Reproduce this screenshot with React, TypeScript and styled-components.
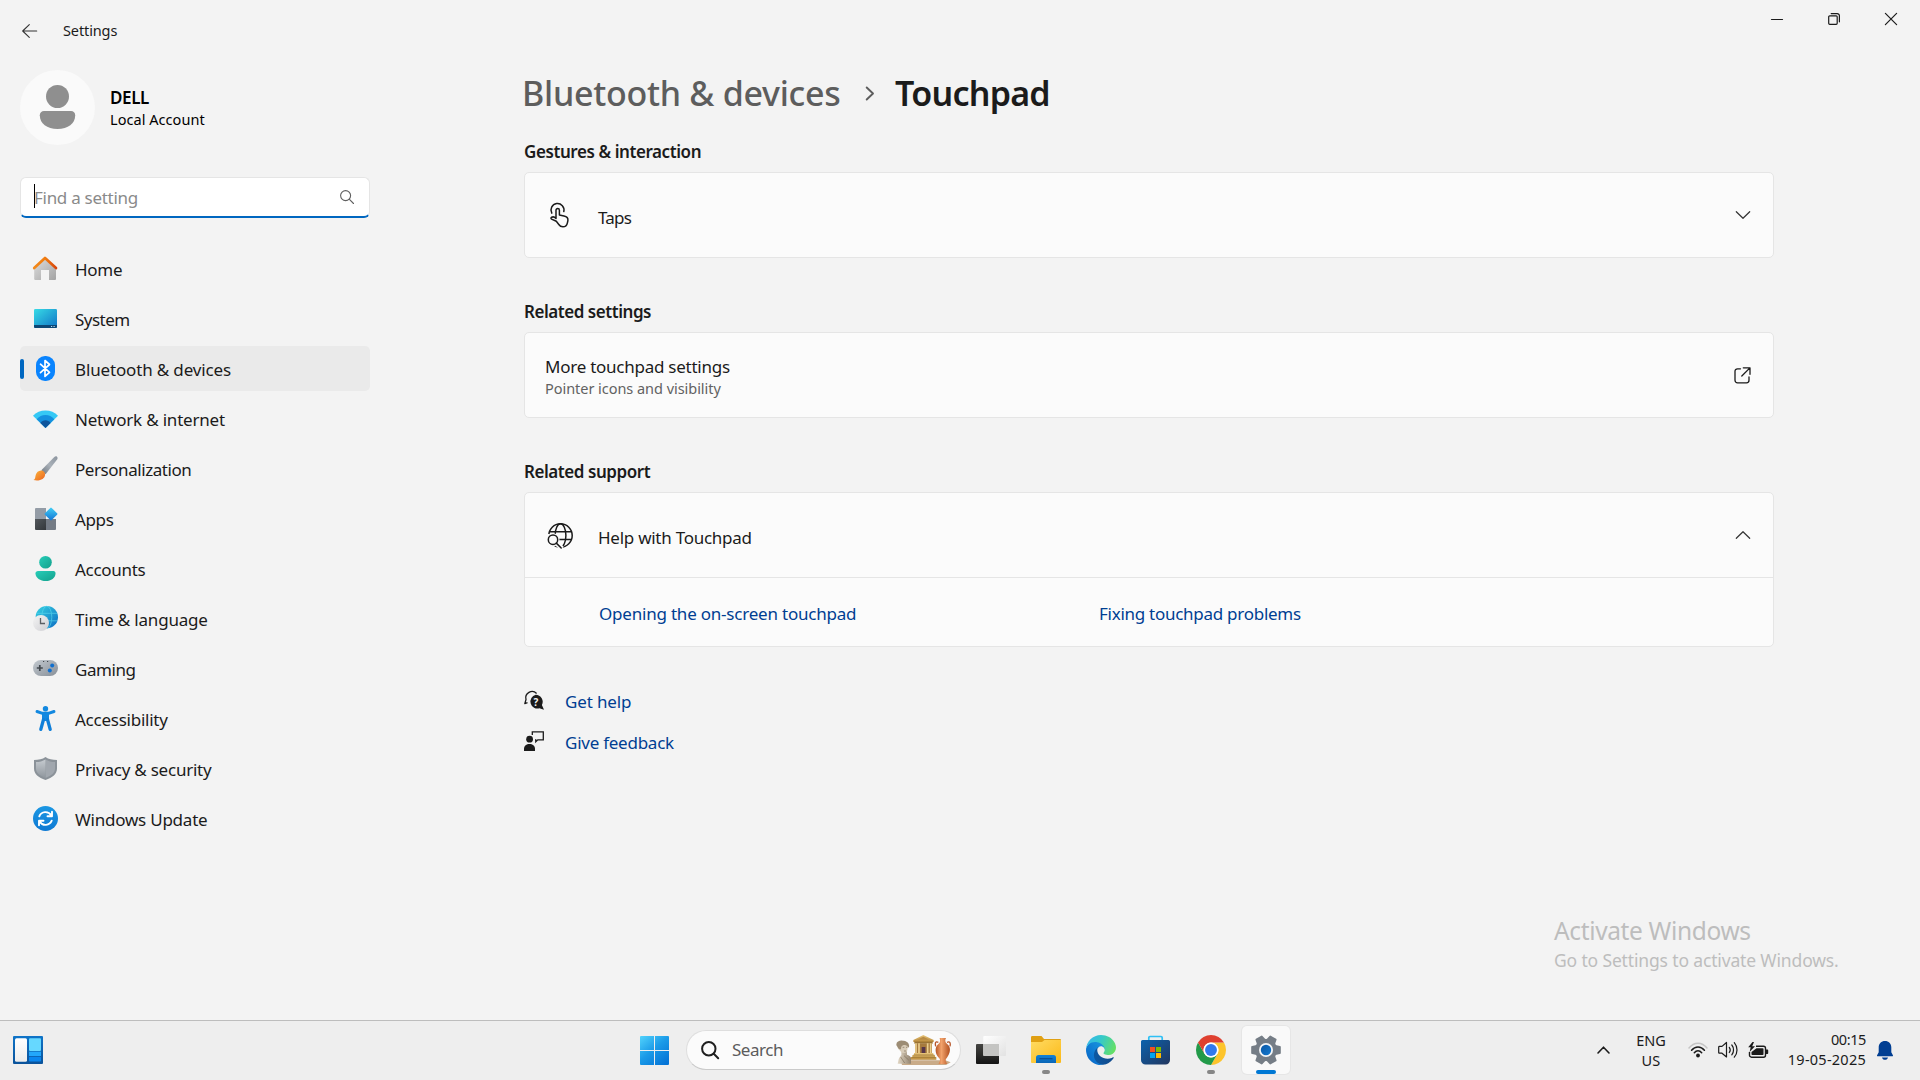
import React from "react";
import styled, { createGlobalStyle } from "styled-components";

const GlobalStyle = createGlobalStyle`
  *, *::before, *::after { box-sizing: border-box; }
  body { margin: 0; background: #f3f3f3; overflow: hidden; }
  svg { display: block; flex: none; overflow: visible; }
`;

/* ---------- shell ---------- */

const Desktop = styled.div`
  width: 1920px;
  height: 1080px;
  display: flex;
  flex-direction: column;
  background: #f3f3f3;
  color: #1b1b1b;
  font-family: "Noto Sans", "Open Sans", sans-serif;
  font-size: 17px;
  position: relative;
`;

const SettingsWindow = styled.div`
  flex: 1;
  display: flex;
  flex-direction: column;
`;

const TitleBar = styled.header`
  height: 62px;
  display: flex;
  justify-content: space-between;
  align-items: flex-start;
`;

const TitleLeft = styled.div`
  height: 62px;
  display: flex;
  align-items: center;
  gap: 26px;
  padding-left: 22px;
`;

const Label = styled.span<{ $ls?: number }>`
  white-space: nowrap;
  letter-spacing: ${(p) => p.$ls ?? -0.2}px;
`;

const WindowTitle = styled(Label)`
  font-size: 14.5px;
  line-height: 20px;
  margin-bottom: 2px;
`;

const WindowControls = styled.div`
  display: flex;
  padding-right: 1px;
`;

const ControlButton = styled.div`
  width: 57px;
  height: 38px;
  display: flex;
  align-items: center;
  justify-content: center;
`;

const Body = styled.div`
  flex: 1;
  display: grid;
  grid-template-columns: 370px 1250px;
  column-gap: 154px;
`;

/* ---------- sidebar ---------- */

const Sidebar = styled.aside`
  padding: 8px 0 0 20px;
`;

const Profile = styled.div`
  height: 75px;
  display: flex;
  align-items: center;
  gap: 15px;
`;

const ProfileText = styled.div`
  display: flex;
  flex-direction: column;
  padding-top: 1px;
  color: #000;
`;

const ProfileName = styled(Label)`
  font-weight: 600;
  line-height: 22px;
`;

const ProfileKind = styled(Label)`
  font-size: 14.5px;
  line-height: 20px;
`;

const SearchBox = styled.div`
  height: 41px;
  margin-top: 32px;
  display: flex;
  align-items: center;
  padding: 0 15px 0 13px;
  background: #fff;
  border: 1px solid #e5e5e5;
  border-bottom: 2px solid #0067c0;
  border-radius: 6px;
`;

const Caret = styled.i`
  width: 1px;
  height: 24px;
  background: #000;
  margin-bottom: 3px;
`;

const Placeholder = styled(Label)`
  flex: 1;
  color: #8a8a8a;
  line-height: 24px;
  padding-top: 1px;
  margin-left: -1px;
`;

const Nav = styled.nav`
  margin-top: 28px;
  display: flex;
  flex-direction: column;
  gap: 5px;
`;

const NavRow = styled.div<{ $active?: boolean }>`
  height: 45px;
  display: flex;
  align-items: center;
  gap: 17px;
  padding-left: ${(p) => (p.$active ? 0 : 13)}px;
  border-radius: 5px;
  background: ${(p) => (p.$active ? "#eaeaea" : "transparent")};
`;

const ActiveMark = styled.i`
  width: 4px;
  height: 20px;
  border-radius: 2px;
  background: #0067c0;
  margin-right: -8px;
`;

const NavLabel = styled(Label)`
  line-height: 24px;
  padding-top: 2px;
`;

/* ---------- main ---------- */

const Main = styled.main`
  padding-top: 11px;
  display: flex;
  flex-direction: column;
`;

const Breadcrumb = styled.h1`
  margin: 0;
  height: 40px;
  display: flex;
  align-items: center;
  font-size: 34px;
  font-weight: 500;
  line-height: 40px;
`;

const CrumbParent = styled(Label)`
  width: 341px;
  color: #5d5d5d;
  margin-left: -2px;
  margin-right: 2px;
`;

const CrumbCurrent = styled(Label)`
  margin-left: 21px;
  font-weight: 560;
`;

const SectionTitle = styled.h2<{ $first?: boolean; $ls: number }>`
  margin: ${(p) => (p.$first ? 26 : 41)}px 0 7px;
  height: 26px;
  font-size: 17px;
  font-weight: 600;
  line-height: 26px;
  letter-spacing: ${(p) => p.$ls}px;
`;

const Card = styled.section`
  background: #fbfbfb;
  border: 1px solid #e5e5e5;
  border-radius: 5px;
`;

const CardRow = styled.div`
  height: 84px;
  display: flex;
  align-items: center;
  padding: 0 22px 0 20px;
`;

const CardIcon = styled.div<{ $inset?: number }>`
  width: 53px;
  padding: 2px 0 0 ${(p) => p.$inset ?? 2}px;
`;

const CardLabel = styled(Label)`
  flex: 1;
  line-height: 24px;
  padding-top: 6px;
`;

const CardTextStack = styled.div`
  flex: 1;
  display: flex;
  flex-direction: column;
  padding-top: 2px;
`;

const CardTitle = styled(Label)`
  line-height: 22px;
  padding-top: 1px;
`;

const CardCaption = styled(Label)`
  font-size: 14.5px;
  line-height: 20px;
  color: #626262;
`;

const HelpLinks = styled.div`
  height: 69px;
  border-top: 1px solid #e5e5e5;
  display: grid;
  grid-template-columns: 500px 1fr;
  align-items: center;
  padding: 4px 0 0 74px;
`;

const Link = styled(Label)`
  color: #003e92;
  line-height: 24px;
`;

const FooterLinks = styled.div`
  margin-top: 33px;
`;

const FooterRow = styled.div`
  height: 41px;
  display: flex;
  align-items: center;
  gap: 21px;

  svg {
    margin-bottom: 2px;
  }
`;

const FooterLink = styled(Link)`
  padding-top: 2px;
`;

const Watermark = styled.div`
  position: absolute;
  left: 1554px;
  top: 914px;
  display: flex;
  flex-direction: column;
  color: #bdbdbd;
`;

const WatermarkTitle = styled(Label)`
  font-size: 24.5px;
  line-height: 33px;
`;

const WatermarkText = styled(Label)`
  font-size: 17.5px;
  line-height: 26px;
`;

/* ---------- taskbar ---------- */

const Taskbar = styled.footer`
  height: 60px;
  padding-bottom: 1px;
  display: flex;
  align-items: center;
  background: #eeeeee;
  border-top: 1px solid #bdbdbd;
`;

const WidgetsArea = styled.div`
  width: 627px;
  padding-left: 13px;
`;

const TaskButton = styled.div`
  width: 55px;
  height: 58px;
  display: flex;
  align-items: center;
  justify-content: center;
  position: relative;
`;

const ActiveTile = styled.div`
  width: 48px;
  height: 48px;
  border-radius: 5px;
  background: #f9f9f9;
  box-shadow: 0 0 0 1px #e6e6e6;
  display: flex;
  align-items: center;
  justify-content: center;
`;

const RunMark = styled.i<{ $active?: boolean }>`
  position: absolute;
  bottom: 5px;
  width: ${(p) => (p.$active ? 20 : 8)}px;
  height: 4px;
  border-radius: 2px;
  background: ${(p) => (p.$active ? "#0078d4" : "#868686")};
`;

const TaskSearch = styled.div`
  width: 275px;
  height: 40px;
  margin: 0 2px 0 4px;
  padding: 0 8px 0 14px;
  display: flex;
  align-items: center;
  background: #fbfbfb;
  border: 1px solid #dedede;
  border-bottom-color: #cacaca;
  border-radius: 20px;
`;

const TaskSearchText = styled(Label)`
  flex: 1;
  padding-left: 13px;
  color: #5c5c5c;
  line-height: 24px;
`;

const Tray = styled.div`
  margin-left: auto;
  padding-right: 27px;
  display: flex;
  align-items: center;
`;

const Language = styled.div`
  width: 30px;
  margin: -1px 22px 0 26px;
  display: flex;
  flex-direction: column;
  align-items: center;
  font-size: 14.5px;
  line-height: 20px;
`;

const StatusIcons = styled.div`
  display: flex;
  align-items: center;
  gap: 10px;
`;

const Clock = styled.div`
  width: 78px;
  margin: -3px 11px 0 19px;
  display: flex;
  flex-direction: column;
  align-items: flex-end;
  font-size: 14.5px;
  line-height: 20px;
`;

/* ---------- navigation icons ---------- */

const HomeIcon = () => (
  <svg width="25" height="25" viewBox="0 0 25 25">
    <defs>
      <linearGradient id="hw" x1="0" y1="0" x2="1" y2="1"><stop stopColor="#dedede" /><stop offset="1" stopColor="#a3a3a3" /></linearGradient>
      <linearGradient id="hr" x1="0" x2="1"><stop stopColor="#f28a1c" /><stop offset=".5" stopColor="#f07c10" /><stop offset="1" stopColor="#d8450c" /></linearGradient>
    </defs>
    <path d="M1.200 10.500 12 2l11 8.500V23a1 1 0 0 1-1 1h-6V14H8v10H2.200a1 1 0 0 1-1-1z" fill="url(#hw)" />
    <path d="M1.200 12 12 2l11 10" fill="none" stroke="url(#hr)" strokeWidth="2.700" strokeLinecap="round" strokeLinejoin="round" />
  </svg>
);
const SystemIcon = () => (
  <svg width="25" height="25" viewBox="0 0 25 25">
    <defs><linearGradient id="sy" x1="0" y1="0" x2="1" y2="1"><stop stopColor="#37dbe6" /><stop offset="1" stopColor="#0f73c6" /></linearGradient></defs>
    <rect x="1" y="3" width="23" height="19" rx="1.300" fill="url(#sy)" />
    <path d="M1 19h23v1.800A1.200 1.200 0 0 1 22.800 22H2.200A1.200 1.200 0 0 1 1 20.800z" fill="#0c4775" />
    <path d="M18 20.500h1.200M20.500 20.500h1.200" stroke="#b8dcf0" />
  </svg>
);
const BluetoothIcon = () => (
  <svg width="25" height="25" viewBox="0 0 25 25">
    <rect x="3" y="0" width="19" height="25" rx="9" fill="#0a84fe" />
    <path d="M7.500 8.200l9 8.200-4.500 4V4.500l4.500 4-9 8.200" fill="none" stroke="#fff" strokeWidth="1.700" strokeLinejoin="round" strokeLinecap="round" />
  </svg>
);
const NetworkIcon = () => (
  <svg width="25" height="25" viewBox="0 0 25 25">
    <path d="M0 9.700C6 2.600 19 2.600 25 9.700L12.500 22z" fill="#35c8f5" />
    <path d="M3.700 13.300C8 7.600 17 7.600 21.300 13.300L12.500 22z" fill="#1490df" />
    <path d="M7.400 17C9.800 13.300 15.200 13.300 17.600 17L12.500 22z" fill="#0d559c" />
  </svg>
);
const BrushIcon = () => (
  <svg width="25" height="25" viewBox="0 0 25 25">
    <defs>
      <linearGradient id="b1" x1="1" y1="0" x2="0" y2="1"><stop stopColor="#8b949e" /><stop offset=".5" stopColor="#a9b0b8" /><stop offset="1" stopColor="#6e7780" /></linearGradient>
      <linearGradient id="b2" x1="0" y1="0" x2="1" y2="1"><stop stopColor="#fbb63c" /><stop offset="1" stopColor="#ec6420" /></linearGradient>
    </defs>
    <path d="M23.800.6c1 .8 1 1.900.3 3L12.600 18.200 8.300 14.200 21.300 1c.9-.8 1.700-1 2.500-.4z" fill="url(#b1)" />
    <path d="M8 14.500c2-.3 4.300 1.700 4.100 4.200-.4 4.300-5.200 6.700-11.600 5.400C2.600 23 2 21.500 2.800 18.800c.6-2.400 2.600-4.100 5.200-4.300z" fill="url(#b2)" />
  </svg>
);
const AppsIcon = () => (
  <svg width="25" height="25" viewBox="0 0 25 25">
    <defs>
      <linearGradient id="ap" x1="0" y1="0" x2="1" y2="1"><stop stopColor="#43d0f6" /><stop offset="1" stopColor="#1273d4" /></linearGradient>
      <linearGradient id="ad" x1="0" y1="0" x2="1" y2="1"><stop stopColor="#52575c" /><stop offset="1" stopColor="#33373b" /></linearGradient>
    </defs>
    <path d="M3 2h10v11H2V3a1 1 0 0 1 1-1z" fill="#949ca6" />
    <path d="M2 13h11v11H3a1 1 0 0 1-1-1z" fill="url(#ad)" />
    <path d="M13 13h10v10a1 1 0 0 1-1 1h-9z" fill="#747b85" />
    <rect x="13.200" y="3.200" width="9.600" height="9.600" rx="1" transform="rotate(45 18 8)" fill="url(#ap)" />
  </svg>
);
const AccountsIcon = () => (
  <svg width="25" height="25" viewBox="0 0 25 25">
    <defs><linearGradient id="ac" x1="0" y1="0" x2="1" y2="1"><stop stopColor="#27cdb8" /><stop offset="1" stopColor="#13a08c" /></linearGradient></defs>
    <circle cx="12.500" cy="6.300" r="6.300" fill="url(#ac)" />
    <path d="M5 15h15.500c1.300 0 2 1 2 2.200 0 4.700-4.400 7.800-9.800 7.800S2.500 22 2.500 17.200C2.500 16 3.500 15 5 15z" fill="url(#ac)" />
  </svg>
);
const TimeIcon = () => (
  <svg width="25" height="25" viewBox="0 0 25 25">
    <defs>
      <linearGradient id="ti" x1="0" y1="0" x2="1" y2="1"><stop stopColor="#37d3e3" /><stop offset="1" stopColor="#0d6cc2" /></linearGradient>
      <linearGradient id="tc" x1="0" y1="0" x2="1" y2="1"><stop stopColor="#f4f4f4" /><stop offset="1" stopColor="#cfcfd3" /></linearGradient>
    </defs>
    <circle cx="13.800" cy="11.200" r="11.200" fill="url(#ti)" />
    <g fill="none" stroke="#5fdcf0" strokeWidth="1" opacity=".6">
      <ellipse cx="13.800" cy="11.200" rx="5" ry="11" />
      <path d="M4 7.300h20M4 14.800h20" />
    </g>
    <circle cx="8" cy="17" r="8" fill="url(#tc)" />
    <path d="M7.500 12v5.500H12" fill="none" stroke="#5b5f64" strokeWidth="1.300" />
  </svg>
);
const GamingIcon = () => (
  <svg width="25" height="25" viewBox="0 0 25 25">
    <defs><linearGradient id="ga" x1="0" y1="0" x2="1" y2="1"><stop stopColor="#c3c9cf" /><stop offset="1" stopColor="#878f98" /></linearGradient></defs>
    <rect x="0" y="4" width="25" height="16" rx="8" fill="url(#ga)" />
    <path d="M6.800 9v6M3.800 12h6" stroke="#43494f" strokeWidth="1.700" />
    <circle cx="19.200" cy="9.600" r="2" fill="#1170cf" />
    <circle cx="16.800" cy="14.400" r="2" fill="#1170cf" />
    <path d="M10 5.500h1.200M14 5.500h1.200" stroke="#43494f" />
  </svg>
);
const AccessibilityIcon = () => (
  <svg width="25" height="25" viewBox="0 0 25 25">
    <circle cx="12.500" cy="2.700" r="2.700" fill="#1288e0" />
    <path d="M4 5.500 9.500 7.300h6L21 5.500" fill="none" stroke="#1288e0" strokeWidth="2.900" strokeLinecap="round" strokeLinejoin="round" />
    <path d="M9 7h7v8H9z" fill="#1288e0" />
    <path d="M10.500 13.500 7.800 23.400M14.500 13.500 17.200 23.400" stroke="#0f7fd9" strokeWidth="3.300" strokeLinecap="round" />
  </svg>
);
const PrivacyIcon = () => (
  <svg width="25" height="25" viewBox="0 0 25 25">
    <defs><linearGradient id="pr" x1="0" y1="0" x2="0" y2="1"><stop stopColor="#c6cbd0" /><stop offset="1" stopColor="#8f969d" /></linearGradient></defs>
    <path d="M12.500 1c3 2.200 7 3 11.500 3v8.500c0 5.500-4.500 9-11.500 11.500C5.500 21.500 1 18 1 12.500V4c4.500 0 8.500-.8 11.500-3z" fill="#8b9299" />
    <path d="M12.500 3.500c2.800 1.700 6 2.500 9.500 2.600v6.500c0 4.300-3.500 7.100-9.500 9.300z" fill="#a1a7ae" />
    <path d="M12.500 3.500C9.700 5.200 6.500 6 3 6.100v6.500c0 4.300 3.500 7.100 9.500 9.300z" fill="url(#pr)" />
  </svg>
);
const UpdateIcon = () => (
  <svg width="25" height="25" viewBox="0 0 25 25">
    <defs><linearGradient id="up" x1="0" y1="0" x2="0" y2="1"><stop stopColor="#1b97e3" /><stop offset="1" stopColor="#0e79d3" /></linearGradient></defs>
    <circle cx="12.500" cy="12.500" r="12.500" fill="url(#up)" />
    <g fill="none" stroke="#fff" strokeWidth="1.900" strokeLinecap="round" strokeLinejoin="round">
      <path d="M6.300 10.300a6.700 6.700 0 0 1 11.900-1M19 5.800v4.500h-4.500" />
      <path d="M18.700 14.700a6.700 6.700 0 0 1-11.900 1M6 19.200v-4.500h4.500" />
    </g>
  </svg>
);

/* ---------- content icons ---------- */

const TapIcon = () => (
  <svg width="21" height="24" viewBox="0 0 21 24" fill="none" stroke="#1b1b1b" strokeWidth="1.500" strokeLinecap="round" strokeLinejoin="round">
    <path d="M2.800 9.200A6.500 6.500 0 1 1 14.800 7.600" />
    <path d="M7 14.500V6.300a1.700 1.700 0 0 1 3.400 0v4.800l4.600.9c2.700.5 4.200 2 3.900 4.500l-.5 2.300c-.5 2.500-2.100 4-4.500 4-1.800 0-3.200-.9-4.100-2.300l-2.500-3.200-4.700-2.200c-.9-.5-.8-1.400.1-1.900 1.500-.7 2.700-.5 4.300 1.300z" />
  </svg>
);
const GlobeSearchIcon = () => (
  <svg width="27" height="26" viewBox="0 0 27 26" fill="none" stroke="#1b1b1b" strokeWidth="1.500">
    <circle cx="13.500" cy="12.500" r="11.700" />
    <ellipse cx="13.500" cy="12.500" rx="5.400" ry="11.700" />
    <path d="M3 8.800h21M12 16.500h12.500" />
    <path d="M6 16.800 15 25.500M0 11v10" stroke="#fbfbfb" strokeWidth="5" />
    <circle cx="6" cy="16.700" r="6.500" fill="#fbfbfb" stroke="none" />
    <circle cx="6" cy="16.700" r="4.700" />
    <path d="M9.300 20.100 14.200 25" strokeLinecap="round" />
  </svg>
);
const HelpBubbleIcon = () => (
  <svg width="20" height="20" viewBox="0 0 20 20">
    <path d="M12.600 3.500A6.300 6.300 0 0 0 2 9.500L.8 13.700l2.700-1" fill="none" stroke="#1b1b1b" strokeWidth="1.300" strokeLinejoin="round" />
    <path d="M11.700 4.800a7 7 0 0 1 6.200 10.300l2.100 4.700-4.600-1.500A7 7 0 1 1 11.700 4.800z" fill="#1b1b1b" />
    <text x="11.800" y="15.600" textAnchor="middle" fill="#f3f3f3" fontSize="10" fontWeight="700">?</text>
  </svg>
);
const FeedbackIcon = () => (
  <svg width="20" height="20" viewBox="0 0 20 20">
    <path d="M8.300 4V.8h11v8h-5.500l-2 2V8.800h-.8" fill="none" stroke="#1b1b1b" strokeWidth="1.300" />
    <circle cx="5.600" cy="8.200" r="3.400" fill="#1b1b1b" />
    <path d="M0 20v-2c0-3.500 2.500-5 5.500-5s5.500 1.500 5.500 5v2z" fill="#1b1b1b" />
  </svg>
);
const Chevron = ({ d, w, h, s = 1.2, c = "#333" }: { d: string; w: number; h: number; s?: number; c?: string }) => (
  <svg width={w} height={h} viewBox={`0 0 ${w} ${h}`}>
    <path d={d} fill="none" stroke={c} strokeWidth={s} strokeLinecap="round" strokeLinejoin="round" />
  </svg>
);
const OpenExternalIcon = () => (
  <svg width="17" height="17" viewBox="0 0 17 17" fill="none" stroke="#1b1b1b" strokeWidth="1.300" strokeLinecap="round" strokeLinejoin="round">
    <path d="M6.500 1.800H3.500a2.500 2.500 0 0 0-2.500 2.500v9A2.500 2.500 0 0 0 3.500 15.800h9a2.500 2.500 0 0 0 2.500-2.500V10" />
    <path d="M9.300.8h6.700v6.500M15.700 1.100 7.800 9" />
  </svg>
);

/* ---------- taskbar icons ---------- */

const WidgetsIcon = () => (
  <svg width="30" height="28" viewBox="0 0 30 28">
    <defs>
      <linearGradient id="wg" x1="0" y1="0" x2="0" y2="1"><stop stopColor="#0f74c8" /><stop offset="1" stopColor="#0a529a" /></linearGradient>
      <linearGradient id="ww" x1="0" y1="0" x2="0" y2="1"><stop stopColor="#fff" /><stop offset="1" stopColor="#ececec" /></linearGradient>
    </defs>
    <rect width="30" height="28" rx="1" fill="url(#wg)" />
    <rect x="2" y="2.300" width="12" height="23.400" rx="1.500" fill="url(#ww)" />
    <rect x="16" y="2.300" width="12" height="12.700" rx="1" fill="#66d8ff" />
    <rect x="16" y="15.600" width="12" height="4.400" fill="#22a7fb" />
    <rect x="16" y="20.800" width="12" height="4.700" rx=".8" fill="#0a86ee" />
  </svg>
);
const StartIcon = () => (
  <svg width="29" height="29" viewBox="0 0 29 29">
    <defs><linearGradient id="st" gradientUnits="userSpaceOnUse" x1="0" y1="0" x2="24" y2="29"><stop stopColor="#52d3fc" /><stop offset=".5" stopColor="#1b9be8" /><stop offset="1" stopColor="#0574d6" /></linearGradient></defs>
    <path d="M1 0h13v14H0V1a1 1 0 0 1 1-1zM15 0h13a1 1 0 0 1 1 1v13H15zM0 15h14v14H1a1 1 0 0 1-1-1zM15 15h14v13a1 1 0 0 1-1 1H15z" fill="url(#st)" />
  </svg>
);
const MuseumArt = () => (
  <svg width="56" height="30" viewBox="0 0 168 90">
    <defs>
      <linearGradient id="vs" x1="0" x2="1"><stop stopColor="#b75625" /><stop offset=".4" stopColor="#f2a36c" /><stop offset="1" stopColor="#b14f1f" /></linearGradient>
      <linearGradient id="bu" x1="0" x2="1"><stop stopColor="#e2d8c6" /><stop offset="1" stopColor="#94846f" /></linearGradient>
      <linearGradient id="te" x1="0" y1="0" x2="0" y2="1"><stop stopColor="#e8c67c" /><stop offset="1" stopColor="#b98a3b" /></linearGradient>
    </defs>
    <path d="M14 76h134l16 6-14 8H18z" fill="#c9ab88" />
    <path d="M82 0l31 15v6H52v-6z" fill="url(#te)" />
    <path d="M82 5l18 9H64z" fill="#b88b45" />
    <rect x="55" y="20" width="55" height="6" fill="#9a7434" />
    <path d="M57 25h51v30H57z" fill="#a67a3d" />
    <rect x="77" y="36" width="11" height="18" fill="#56364a" />
    <path d="M60 25v30M69 25v30M95 25v30M104 25v30" stroke="#ecd090" strokeWidth="5" />
    <path d="M54 54h58v6h5v6h4v8H44v-8h5v-6h5z" fill="url(#te)" />
    <path d="M52 60h63M47 67h72" stroke="#8e6828" strokeWidth="1.800" />
    <path d="M16 46h16l1 13c6 2 11 4 12 10v17H5c2-7 2-13 5-18l6-8z" fill="url(#bu)" />
    <path d="M4 30c1-8 8-12 17-11 9 0 15 6 15 14 0 5-2 8-2 12-1 6-5 9-11 9-5 0-9-3-12-8C6 42 3 36 4 30z" fill="#d8ccb8" />
    <path d="M1 28c1-9 10-12 19-11 10 0 18 5 19 13 1 4 0 7-2 8-3-7-9-10-16-7-5 2-6 6-6 12-5 0-9-3-10-7-3-2-4-5-4-8z" fill="#9c8c74" />
    <path d="M20 37h5M30 37h4M24 48h6M14 66l12 18M24 62l14 13" stroke="#75664f" strokeWidth="1.800" fill="none" />
    <path d="M131 9h19l-2 5c-1 7 2 10 8 15 8 8 7 20 2 30-3 7-8 11-9 15-1 5 4 8 4 13h-25c0-5 5-8 4-13-1-5-7-8-10-15-4-10-5-22 3-30 6-5 8-8 7-14z" fill="url(#vs)" />
    <path d="M127 22c-10-5-10 4-8 12M153 22c10-5 11 4 9 12" fill="none" stroke="#b8562a" strokeWidth="4" />
  </svg>
);
const TaskViewIcon = () => (
  <svg width="30" height="28" viewBox="0 0 30 28">
    <defs><linearGradient id="tv" x1="0" y1="0" x2="0" y2="1"><stop stopColor="#454542" /><stop offset="1" stopColor="#141414" /></linearGradient>
      <linearGradient id="tw" x1="0" y1="0" x2="1" y2="1"><stop stopColor="#fff" /><stop offset="1" stopColor="#e2e2e2" /></linearGradient></defs>
    <rect x="0" y="8" width="23" height="20" rx="1" fill="url(#tv)" />
    <rect x="7.300" y="0" width="22.700" height="20" rx="1" fill="url(#tw)" />
    <path d="M7.300 8H23v12H8.300a1 1 0 0 1-1-1z" fill="#c4c4c2" />
  </svg>
);
const FolderIcon = () => (
  <svg width="30" height="28" viewBox="0 0 30 28">
    <defs>
      <linearGradient id="fo" x1="0" y1="0" x2="1" y2="1"><stop stopColor="#ffdb63" /><stop offset="1" stopColor="#fbb917" /></linearGradient>
      <linearGradient id="fb" x1="0" y1="0" x2="0" y2="1"><stop stopColor="#1282d6" /><stop offset="1" stopColor="#0b66b6" /></linearGradient>
    </defs>
    <path d="M1.200 0h9.300L13 3h16a1 1 0 0 1 1 1v6H0V1.200A1.200 1.200 0 0 1 1.200 0z" fill="#e0a013" />
    <path d="M0 6h11l2.500-2H30v22a1 1 0 0 1-1 1H1a1 1 0 0 1-1-1z" fill="url(#fo)" />
    <path d="M5 27v-5.500A2.500 2.500 0 0 1 7.500 19h15a2.500 2.500 0 0 1 2.500 2.500V27z" fill="url(#fb)" />
    <path d="M8.500 22.700h13" stroke="#0b4d91" strokeWidth="1.200" />
  </svg>
);
const EdgeIcon = () => (
  <svg width="30" height="30" viewBox="0 0 256 256">
    <defs>
      <linearGradient id="e1" x1="0" x2="1"><stop stopColor="#0c59a4" /><stop offset="1" stopColor="#114a8b" /></linearGradient>
      <linearGradient id="e2" x1="1" y1="0" x2="0" y2="1"><stop stopColor="#1b9de2" /><stop offset=".7" stopColor="#0c73cf" /><stop offset="1" stopColor="#0d61ba" /></linearGradient>
      <linearGradient id="e3" x1="0" y1=".3" x2="1" y2=".6"><stop stopColor="#35b8ec" /><stop offset=".45" stopColor="#36c9c8" /><stop offset="1" stopColor="#66e063" /></linearGradient>
    </defs>
    <path d="M231 190.500c-3.400 1.800-6.900 3.400-10.500 4.700-11.500 4.300-23.600 6.500-35.900 6.500-47.300 0-88.500-32.500-88.500-74.300.1-11.400 6.400-21.900 16.400-27.300-42.800 1.800-53.800 46.400-53.800 72.500 0 73.900 68.100 81.400 82.800 81.400 7.900 0 19.800-2.300 27-4.600l1.300-.4c27.600-9.500 51-28.100 66.600-52.800 1.200-1.900.6-4.300-1.200-5.500-1.300-.8-2.900-.9-4.200-.2z" fill="url(#e1)" />
    <path d="M105.700 241.400c-8.900-5.500-16.600-12.800-22.700-21.300-26.300-36-18.400-86.500 17.600-112.800 3.800-2.700 7.700-5.200 11.900-7.200 3.100-1.500 8.400-4.100 15.500-4 10.100.1 19.600 4.900 25.700 13 4 5.400 6.300 11.900 6.400 18.700 0-.2 24.500-79.600-80-79.600-43.900 0-80 41.700-80 78.200-.2 19.300 4 38.500 12.100 56 27.600 58.800 94.800 87.600 156.400 67.100-21.200 6.500-44.100 3.700-62.900-8.100z" fill="url(#e2)" />
    <path d="M152.300 148.900c-.9 1-3.400 2.500-3.400 5.600 0 2.600 1.700 5.200 4.800 7.300 14.300 10 41.400 8.600 41.500 8.600 10.700 0 21.100-2.900 30.300-8.300 18.800-11 30.400-31.100 30.400-52.900.3-22.400-8-37.300-11.300-43.900C223.500 23.900 177.700 0 128 0 58 0 1 56.200 0 126.200c.5-36.500 36.800-66 80-66 3.500 0 23.500.3 42 10.100 16.300 8.600 24.900 18.900 30.800 29.200 6.200 10.700 7.300 24.100 7.300 29.500-.1 5.300-2.700 13.300-7.800 19.900z" fill="url(#e3)" />
  </svg>
);
const StoreIcon = () => (
  <svg width="29" height="30" viewBox="0 0 29 30">
    <defs><linearGradient id="so" x1="0" y1="0" x2="1" y2="1"><stop stopColor="#0b62ad" /><stop offset="1" stopColor="#22365f" /></linearGradient></defs>
    <path d="M7.800 5.500V2.700c0-.8.500-1.200 1.200-1.200h11c.7 0 1.200.4 1.200 1.200v2.800" fill="none" stroke="#2fc0f5" strokeWidth="1.700" />
    <path d="M1.500 5h26a1.500 1.500 0 0 1 1.500 1.500V25a4.500 4.500 0 0 1-4.500 4.500h-20A4.500 4.500 0 0 1 0 25V6.500A1.500 1.500 0 0 1 1.500 5z" fill="url(#so)" />
    <path d="M9 12h5v5H9z" fill="#f25022" /><path d="M15 12h5v5h-5z" fill="#7fba00" />
    <path d="M9 18h5v5H9z" fill="#00a4ef" /><path d="M15 18h5v5h-5z" fill="#ffb900" />
  </svg>
);
const chromeBlade = "M24 12H44.780A24 24 0 0 1 24 48L34.390 30A12 12 0 0 0 24 12z";
const ChromeIcon = () => (
  <svg width="30" height="30" viewBox="0 0 48 48">
    <path d={chromeBlade} fill="#fdc42c" />
    <path d={chromeBlade} fill="#229a49" transform="rotate(120 24 24)" />
    <path d={chromeBlade} fill="#df4030" transform="rotate(240 24 24)" />
    <circle cx="24" cy="24" r="12" fill="#fff" />
    <circle cx="24" cy="24" r="9.500" fill="#3179ed" />
  </svg>
);
const GearIcon = () => (
  <svg width="30" height="30" viewBox="-15 -15 30 30">
    <defs>
      <linearGradient id="gc" x1="0" y1="0" x2="1" y2="1"><stop stopColor="#0a57a5" /><stop offset="1" stopColor="#1479cf" /></linearGradient>
    </defs>
    <circle r="11" fill="#767e87" />
    {[0, 60, 120, 180, 240, 300].map((a) => (
      <path key={a} transform={`rotate(${a})`} d="M7-6.200 10.500-4.700 14-4a.9.900 0 0 1 .8.900V3.100a.9.900 0 0 1-.8.900L10.500 4.700 7 6.200z" fill="#757d86" />
    ))}
    <circle r="7" fill="#f3f5f7" />
    <circle r="5.200" fill="url(#gc)" />
  </svg>
);
const WifiIcon = () => (
  <svg width="20" height="16" viewBox="0 0 20 16" fill="none" strokeLinecap="round" strokeWidth="1.500">
    <path d="M1 6C6-.5 14-.5 19 6" stroke="#c4c4c4" />
    <path d="M3.600 8.300c3.600-4.500 9.200-4.500 12.800 0M6.300 10.800c2.200-2.600 5.200-2.600 7.400 0" stroke="#1b1b1b" />
    <circle cx="10" cy="13.500" r="1.900" fill="#1b1b1b" />
  </svg>
);
const SpeakerIcon = () => (
  <svg width="20" height="18" viewBox="0 0 20 18" fill="none" stroke="#1b1b1b" strokeWidth="1.200" strokeLinecap="round" strokeLinejoin="round">
    <path d="M.7 6.200c0-.5.300-.8.800-.8H4L8.500 1.500V16L4 12.200H1.500c-.5 0-.8-.3-.8-.8z" />
    <path d="M11.300 6.300c1.100 1.500 1.100 3.700 0 5.200M13.800 4c2.300 2.800 2.300 7 0 9.800M16.300 1.600c3.600 4.200 3.600 10.400 0 14.600" />
  </svg>
);
const BatteryIcon = () => (
  <svg width="21" height="17" viewBox="0 0 21 17">
    <path d="M8 4.200h7.500a2 2 0 0 1 2 2v7a2 2 0 0 1-2 2h-12a2 2 0 0 1-2-2V10" fill="none" stroke="#1b1b1b" strokeWidth="1.400" />
    <path d="M8.500 6.300h6.200c.5 0 .8.300.8.800v5.200c0 .5-.3.800-.8.800H4.300c-.5 0-.8-.3-.8-.8V10z" fill="#1b1b1b" />
    <path d="M18 7.500h1.200c.6 0 1 .4 1 1v2.400c0 .6-.4 1-1 1H18zM4.500 0 .2 5.300h2.500L1.600 10 7 4.300H4.200L6 0z" fill="#1b1b1b" />
  </svg>
);
const BellIcon = () => (
  <svg width="16" height="19" viewBox="0 0 16 19">
    <path d="M8 0c3.700 0 6.300 2.700 6.300 6.300v5l1.600 3c.3.600 0 1-.6 1H.7c-.6 0-.9-.4-.6-1l1.600-3v-5C1.700 2.700 4.300 0 8 0zM5 16.500h6c-.4 1.400-1.500 2.300-3 2.300s-2.600-.9-3-2.300z" fill="#003e92" />
  </svg>
);

/* ---------- data ---------- */

const navItems: { label: string; ls: number; icon: React.ReactNode; active?: boolean }[] = [
  { label: "Home", ls: -0.26, icon: <HomeIcon /> },
  { label: "System", ls: -0.52, icon: <SystemIcon /> },
  { label: "Bluetooth & devices", ls: -0.15, icon: <BluetoothIcon />, active: true },
  { label: "Network & internet", ls: -0.2, icon: <NetworkIcon /> },
  { label: "Personalization", ls: -0.44, icon: <BrushIcon /> },
  { label: "Apps", ls: -0.35, icon: <AppsIcon /> },
  { label: "Accounts", ls: -0.3, icon: <AccountsIcon /> },
  { label: "Time & language", ls: -0.19, icon: <TimeIcon /> },
  { label: "Gaming", ls: -0.44, icon: <GamingIcon /> },
  { label: "Accessibility", ls: -0.25, icon: <AccessibilityIcon /> },
  { label: "Privacy & security", ls: -0.23, icon: <PrivacyIcon /> },
  { label: "Windows Update", ls: -0.23, icon: <UpdateIcon /> },
];

const taskApps: { name: string; icon: React.ReactNode; running?: boolean; active?: boolean }[] = [
  { name: "taskview", icon: <TaskViewIcon /> },
  { name: "explorer", icon: <FolderIcon />, running: true },
  { name: "edge", icon: <EdgeIcon /> },
  { name: "store", icon: <StoreIcon /> },
  { name: "chrome", icon: <ChromeIcon />, running: true },
  { name: "settings", icon: <GearIcon />, running: true, active: true },
];

export default function App() {
  return (
    <Desktop>
      <GlobalStyle />
      <SettingsWindow>
        <TitleBar>
          <TitleLeft>
            <Chevron w={15} h={14} c="#333" s={1.1} d="M7.300.6.700 7l6.600 6.400M.7 7h14" />
            <WindowTitle $ls={-0.12}>Settings</WindowTitle>
          </TitleLeft>
          <WindowControls>
            <ControlButton><Chevron w={12} h={12} c="#1b1b1b" s={1.2} d="M.5 6.500h11" /></ControlButton>
            <ControlButton><Chevron w={12} h={12} c="#1b1b1b" s={1.2} d="M1.700 2.800h6.500a1 1 0 0 1 1 1v6.500a1 1 0 0 1-1 1H1.700a1 1 0 0 1-1-1V3.800a1 1 0 0 1 1-1zM3.200.6h6a2.200 2.200 0 0 1 2.200 2.200v6" /></ControlButton>
            <ControlButton><Chevron w={12} h={12} c="#1b1b1b" s={1.2} d="M.4.4l11.200 11.200M11.600.4.4 11.600" /></ControlButton>
          </WindowControls>
        </TitleBar>
        <Body>
          <Sidebar>
            <Profile>
              <svg width="75" height="75" viewBox="0 0 75 75">
                <circle cx="37.500" cy="37.500" r="37.500" fill="#fafafa" />
                <circle cx="37.500" cy="26.500" r="11.500" fill="#8f8f8f" />
                <path d="M24 41h27c2.500 0 4.200 1.700 4.200 4.200C55.200 53.500 48 59 37.500 59s-17.700-5.500-17.700-13.800c0-2.500 1.700-4.200 4.200-4.200z" fill="#8f8f8f" />
              </svg>
              <ProfileText>
                <ProfileName $ls={-0.4}>DELL</ProfileName>
                <ProfileKind $ls={0.05}>Local Account</ProfileKind>
              </ProfileText>
            </Profile>
            <SearchBox>
              <Caret />
              <Placeholder $ls={-0.28}>Find a setting</Placeholder>
              <Chevron w={14} h={14} c="#5f5f5f" s={1.1} d="M10.600 5.600a5 5 0 1 1-10 0 5 5 0 0 1 10 0zM9.200 9.200l4.300 4.300" />
            </SearchBox>
            <Nav>
              {navItems.map((n) => (
                <NavRow key={n.label} $active={n.active}>
                  {n.active && <ActiveMark />}
                  {n.icon}
                  <NavLabel $ls={n.ls}>{n.label}</NavLabel>
                </NavRow>
              ))}
            </Nav>
          </Sidebar>
          <Main>
            <Breadcrumb>
              <CrumbParent $ls={-0.27}>Bluetooth &amp; devices</CrumbParent>
              <Chevron w={9} h={14} c="#5d5d5d" s={1.9} d="M1.700 1.500l6.300 6-6.300 6" />
              <CrumbCurrent $ls={-0.75}>Touchpad</CrumbCurrent>
            </Breadcrumb>
            <SectionTitle $first $ls={-0.42}>Gestures &amp; interaction</SectionTitle>
            <Card>
              <CardRow>
                <CardIcon $inset={4}><TapIcon /></CardIcon>
                <CardLabel $ls={-0.8}>Taps</CardLabel>
                <Chevron w={15} h={8} d="M.300.700l6.700 6.600L13.700.7" />
              </CardRow>
            </Card>
            <SectionTitle $ls={-0.46}>Related settings</SectionTitle>
            <Card>
              <CardRow>
                <CardTextStack>
                  <CardTitle $ls={-0.25}>More touchpad settings</CardTitle>
                  <CardCaption $ls={-0.04}>Pointer icons and visibility</CardCaption>
                </CardTextStack>
                <OpenExternalIcon />
              </CardRow>
            </Card>
            <SectionTitle $ls={-0.44}>Related support</SectionTitle>
            <Card>
              <CardRow>
                <CardIcon><GlobeSearchIcon /></CardIcon>
                <CardLabel $ls={-0.26}>Help with Touchpad</CardLabel>
                <Chevron w={15} h={8} d="M.300 7.300 7 .700l6.700 6.600" />
              </CardRow>
              <HelpLinks>
                <Link $ls={-0.21}>Opening the on-screen touchpad</Link>
                <Link $ls={-0.27}>Fixing touchpad problems</Link>
              </HelpLinks>
            </Card>
            <FooterLinks>
              <FooterRow><HelpBubbleIcon /><FooterLink $ls={-0.14}>Get help</FooterLink></FooterRow>
              <FooterRow><FeedbackIcon /><FooterLink $ls={-0.25}>Give feedback</FooterLink></FooterRow>
            </FooterLinks>
          </Main>
        </Body>
      </SettingsWindow>
      <Watermark>
        <WatermarkTitle $ls={-0.36}>Activate Windows</WatermarkTitle>
        <WatermarkText $ls={-0.15}>Go to Settings to activate Windows.</WatermarkText>
      </Watermark>
      <Taskbar>
        <WidgetsArea><WidgetsIcon /></WidgetsArea>
        <TaskButton><StartIcon /></TaskButton>
        <TaskSearch>
          <Chevron w={18} h={18} c="#1f1f1f" s={2} d="M14.500 7.700a6.700 6.700 0 1 1-13.400 0 6.700 6.700 0 0 1 13.400 0zM12.500 12.500l4.700 4.700" />
          <TaskSearchText $ls={-0.46}>Search</TaskSearchText>
          <MuseumArt />
        </TaskSearch>
        {taskApps.map((a) => (
          <TaskButton key={a.name}>
            {a.active ? <ActiveTile>{a.icon}</ActiveTile> : a.icon}
            {a.running && <RunMark $active={a.active} />}
          </TaskButton>
        ))}
        <Tray>
          <Chevron w={13} h={8} c="#1b1b1b" s={1.6} d="M1 7l5.500-5.800L12 7" />
          <Language>
            <Label $ls={0}>ENG</Label>
            <Label $ls={0.2}>US</Label>
          </Language>
          <StatusIcons>
            <WifiIcon />
            <SpeakerIcon />
            <BatteryIcon />
          </StatusIcons>
          <Clock>
            <Label $ls={-0.4}>00:15</Label>
            <Label $ls={0.25}>19-05-2025</Label>
          </Clock>
          <BellIcon />
        </Tray>
      </Taskbar>
    </Desktop>
  );
}
